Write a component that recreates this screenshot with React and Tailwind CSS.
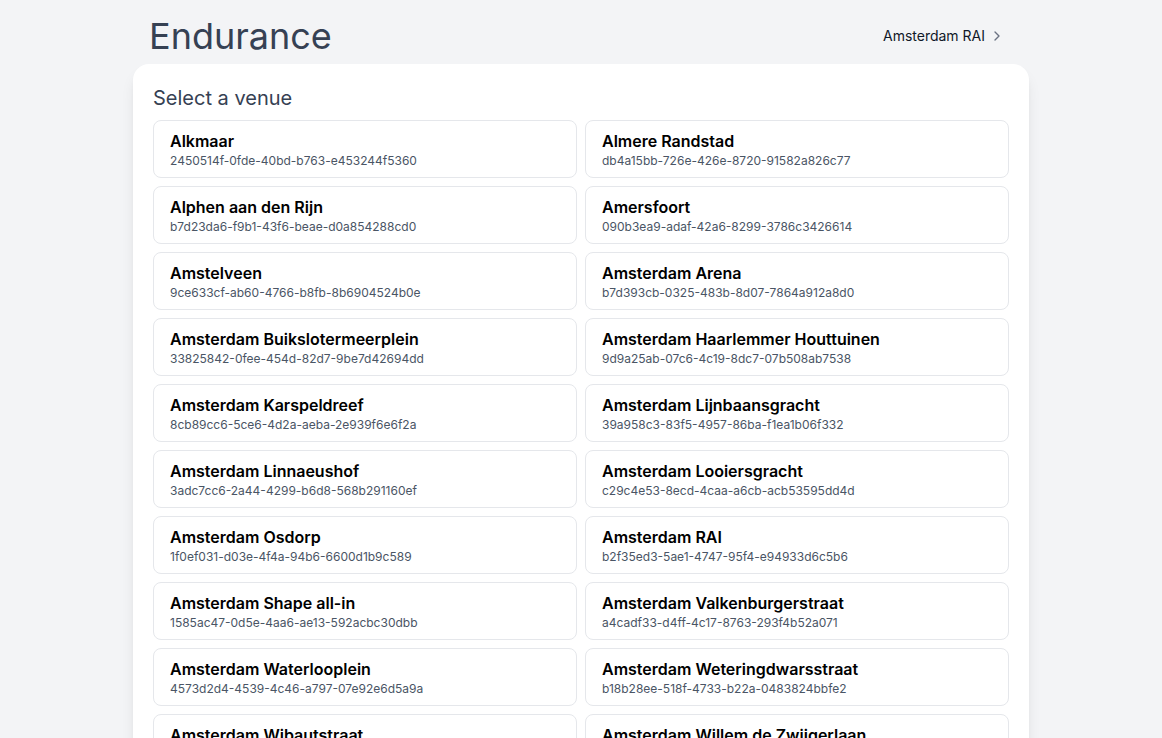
import { ChevronRight } from "lucide-react";

const venues = [
  { name: "Alkmaar", id: "2450514f-0fde-40bd-b763-e453244f5360" },
  { name: "Almere Randstad", id: "db4a15bb-726e-426e-8720-91582a826c77" },
  { name: "Alphen aan den Rijn", id: "b7d23da6-f9b1-43f6-beae-d0a854288cd0" },
  { name: "Amersfoort", id: "090b3ea9-adaf-42a6-8299-3786c3426614" },
  { name: "Amstelveen", id: "9ce633cf-ab60-4766-b8fb-8b6904524b0e" },
  { name: "Amsterdam Arena", id: "b7d393cb-0325-483b-8d07-7864a912a8d0" },
  { name: "Amsterdam Buikslotermeerplein", id: "33825842-0fee-454d-82d7-9be7d42694dd" },
  { name: "Amsterdam Haarlemmer Houttuinen", id: "9d9a25ab-07c6-4c19-8dc7-07b508ab7538" },
  { name: "Amsterdam Karspeldreef", id: "8cb89cc6-5ce6-4d2a-aeba-2e939f6e6f2a" },
  { name: "Amsterdam Lijnbaansgracht", id: "39a958c3-83f5-4957-86ba-f1ea1b06f332" },
  { name: "Amsterdam Linnaeushof", id: "3adc7cc6-2a44-4299-b6d8-568b291160ef" },
  { name: "Amsterdam Looiersgracht", id: "c29c4e53-8ecd-4caa-a6cb-acb53595dd4d" },
  { name: "Amsterdam Osdorp", id: "1f0ef031-d03e-4f4a-94b6-6600d1b9c589" },
  { name: "Amsterdam RAI", id: "b2f35ed3-5ae1-4747-95f4-e94933d6c5b6" },
  { name: "Amsterdam Shape all-in", id: "1585ac47-0d5e-4aa6-ae13-592acbc30dbb" },
  { name: "Amsterdam Valkenburgerstraat", id: "a4cadf33-d4ff-4c17-8763-293f4b52a071" },
  { name: "Amsterdam Waterlooplein", id: "4573d2d4-4539-4c46-a797-07e92e6d5a9a" },
  { name: "Amsterdam Weteringdwarsstraat", id: "b18b28ee-518f-4733-b22a-0483824bbfe2" },
  { name: "Amsterdam Wibautstraat", id: "6e1c9a40-3b2d-4f81-9a6e-2d7c5b19e0a3" },
  { name: "Amsterdam Willem de Zwijgerlaan", id: "f0a3b7d2-91c4-4e5a-b8d6-3c2e7a9f1b54" },
  { name: "Apeldoorn", id: "7d2e4c19-a6b3-4f08-9e51-b3c8d0f2a716" },
  { name: "Arnhem", id: "c5a81f3e-2d94-4b67-8a0c-e1f97b3d5c28" },
];

export default function App() {
  return (
    <div className="min-h-screen bg-gray-100" style={{ fontFamily: "Inter, 'Noto Sans', sans-serif" }}>
      <div className="max-w-4xl mx-auto">
        <header className="h-16 pt-2 pl-4 pr-6 flex items-center justify-between">
          <h1 className="text-4xl text-gray-700">Endurance</h1>
          <button className="flex items-center gap-1 pl-3 py-2 text-sm text-gray-900">
            Amsterdam RAI
            <ChevronRight className="w-4 h-4 text-gray-500" />
          </button>
        </header>

        <main className="bg-white rounded-2xl shadow-lg p-5">
          <h2 className="text-xl text-gray-700 mb-2">Select a venue</h2>
          <div className="grid grid-cols-2 gap-2">
            {venues.map((v) => (
              <button
                key={v.id}
                className="text-left border border-gray-200 rounded-lg px-4 py-2 bg-white"
              >
                <div className="text-base leading-6 font-semibold text-black">{v.name}</div>
                <div className="text-xs leading-4 text-gray-600">{v.id}</div>
              </button>
            ))}
          </div>
        </main>
      </div>
    </div>
  );
}
